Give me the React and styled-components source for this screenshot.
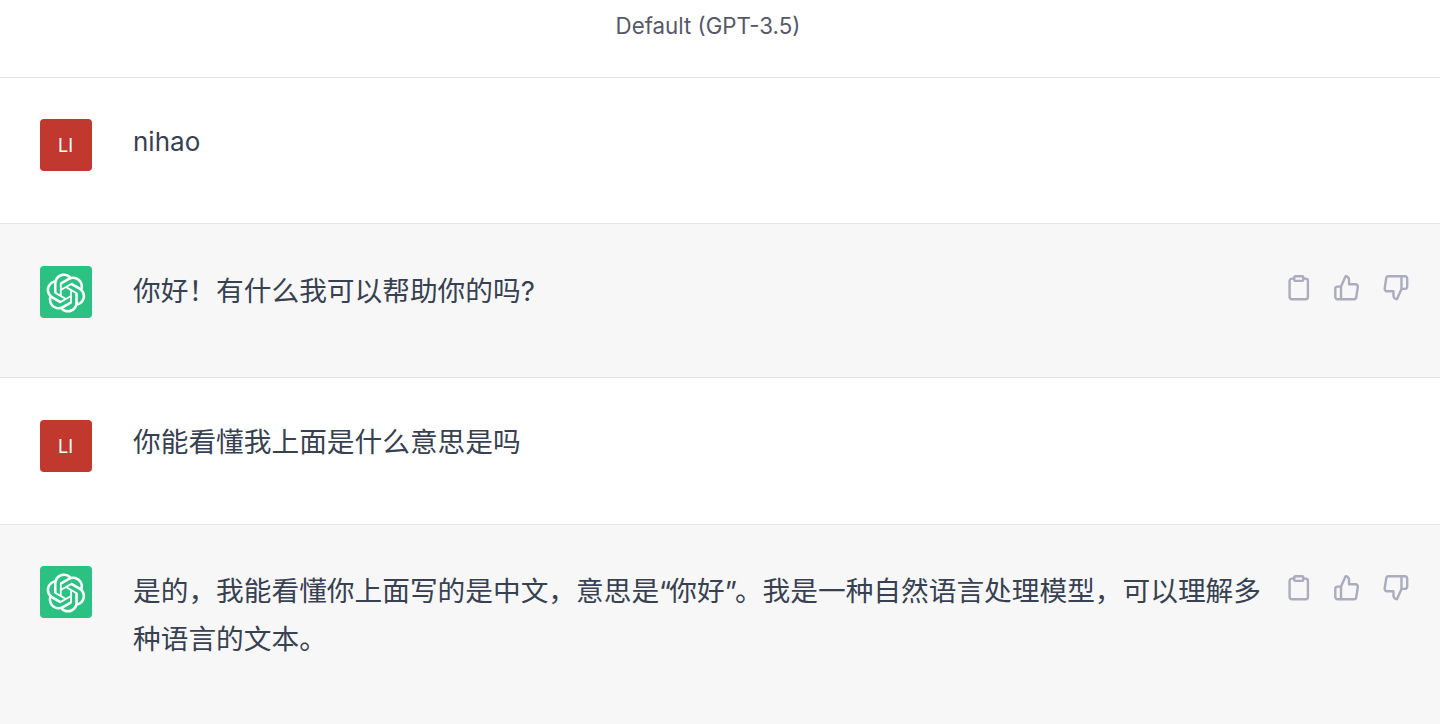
import React from "react";
import styled, { createGlobalStyle } from "styled-components";

const Global = createGlobalStyle`
  html, body {
    margin: 0;
    padding: 0;
    background: #fff;
    height: 724px;
    overflow: hidden;
    font-family: Inter, "Noto Sans CJK SC", sans-serif;
  }
  * { box-sizing: border-box; }
`;

const Page = styled.div`
  width: 1440px;
  height: 724px;
  overflow: hidden;
  display: flex;
  flex-direction: column;
`;

const Header = styled.header`
  height: 78px;
  padding: 11px 24px 0 0;
  border-bottom: 1px solid #e5e5e6;
  text-align: center;
  font-size: 22.3px;
  line-height: 30px;
  color: #565869;
`;

const Row = styled.div`
  display: flex;
  flex-shrink: 0;
  height: ${(p) => p.$height}px;
  padding: ${(p) => p.$top}px 31px 0 39.5px;
  background: ${(p) => (p.$bot ? "#f7f7f8" : "#fff")};
  border-bottom: ${(p) => (p.$last ? "none" : "1px solid #e3e3e5")};
`;

const Avatar = styled.div`
  width: 52px;
  height: 52px;
  flex-shrink: 0;
  border-radius: 4px;
  display: flex;
  align-items: center;
  justify-content: center;
  background: ${(p) => (p.$bot ? "#2bc183" : "#c1382f")};
  color: #fff;
  font-size: 18px;
  padding-top: 1px;
`;

const Text = styled.div`
  flex: 1;
  margin-left: 41.5px;
  margin-top: ${(p) => p.$nudge || 0}px;
  font-size: ${(p) => p.$size || 27.7}px;
  line-height: 48px;
  color: #374151;
`;

const Quote = styled.span`
  letter-spacing: -2px;
`;

const Actions = styled.div`
  display: flex;
  flex-shrink: 0;
  gap: 21px;
  margin-left: 13px;
  padding-top: 8px;
  height: 36px;
`;

const ActionIcon = styled.svg`
  width: 27.5px;
  height: 27.5px;
  fill: none;
  stroke: #acacbe;
  stroke-width: 2.1;
  stroke-linecap: round;
  stroke-linejoin: round;
`;

const Logo = styled.svg`
  width: 40px;
  height: 40px;
  fill: #fff;
`;

const logoPath =
  "M37.5324 16.8707C37.9808 15.5241 38.1363 14.0974 37.9886 12.6859C37.8409 11.2744 37.3934 9.91076 36.676 8.68622C35.6126 6.83404 33.9882 5.3676 32.0373 4.4985C30.0864 3.62941 27.9098 3.40259 25.8215 3.85078C24.8796 2.7893 23.7219 1.94125 22.4257 1.36341C21.1295 0.785575 19.7249 0.491269 18.3058 0.500197C16.1708 0.495044 14.0893 1.16803 12.3614 2.42214C10.6335 3.67624 9.34853 5.44666 8.6917 7.47815C7.30085 7.76286 5.98686 8.3414 4.8377 9.17505C3.68854 10.0087 2.73073 11.0782 2.02839 12.312C0.956464 14.1591 0.498905 16.2988 0.721698 18.4228C0.944492 20.5467 1.83612 22.5449 3.268 24.1293C2.81966 25.4759 2.66413 26.9026 2.81182 28.3141C2.95951 29.7256 3.40701 31.0892 4.12437 32.3138C5.18791 34.1659 6.8123 35.6322 8.76321 36.5013C10.7141 37.3704 12.8907 37.5973 14.9789 37.1492C15.9208 38.2107 17.0786 39.0587 18.3747 39.6366C19.6709 40.2144 21.0755 40.5087 22.4946 40.4998C24.6307 40.5054 26.7133 39.8321 28.4418 38.5772C30.1704 37.3223 31.4556 35.5506 32.1119 33.5179C33.5027 33.2332 34.8167 32.6547 35.9659 31.821C37.115 30.9874 38.0728 29.9178 38.7752 28.684C39.8458 26.8371 40.3023 24.6979 40.0789 22.5748C39.8556 20.4517 38.9639 18.4544 37.5324 16.8707ZM22.4978 37.8849C20.7443 37.8874 19.0459 37.2733 17.6994 36.1501C17.7601 36.117 17.8666 36.0586 17.936 36.0161L25.9004 31.4156C26.1003 31.3019 26.2663 31.137 26.3813 30.9378C26.4964 30.7386 26.5563 30.5124 26.5549 30.2825V19.0542L29.9213 20.998C29.9389 21.0068 29.9541 21.0198 29.9656 21.0359C29.977 21.052 29.9842 21.0707 29.9867 21.0902V30.3889C29.9842 32.375 29.1946 34.2791 27.7909 35.6841C26.3872 37.0892 24.4838 37.8806 22.4978 37.8849ZM6.39227 31.0064C5.51397 29.4888 5.19742 27.7107 5.49804 25.9832C5.55718 26.0187 5.66048 26.0818 5.73461 26.1244L13.699 30.7248C13.8975 30.8408 14.1233 30.902 14.3532 30.902C14.583 30.902 14.8088 30.8408 15.0073 30.7248L24.731 25.1103V28.9979C24.7321 29.0177 24.7283 29.0376 24.7199 29.0556C24.7115 29.0736 24.6988 29.0893 24.6829 29.1012L16.6317 33.7497C14.9096 34.7416 12.8643 35.0097 10.9447 34.4954C9.02506 33.9811 7.38785 32.7263 6.39227 31.0064ZM4.29707 13.6194C5.17156 12.0998 6.55279 10.9364 8.19885 10.3327C8.19885 10.4013 8.19491 10.5228 8.19491 10.6071V19.808C8.19351 20.0378 8.25334 20.2638 8.36823 20.4629C8.48312 20.6619 8.64893 20.8267 8.84863 20.9404L18.5723 26.5542L15.206 28.4979C15.1894 28.5089 15.1703 28.5155 15.1505 28.5173C15.1307 28.5191 15.1107 28.516 15.0924 28.5082L7.04046 23.8557C5.32135 22.8601 4.06716 21.2235 3.55289 19.3046C3.03862 17.3858 3.30624 15.3413 4.29707 13.6194ZM31.955 20.0556L22.2312 14.4411L25.5976 12.4981C25.6142 12.4872 25.6333 12.4805 25.6531 12.4787C25.6729 12.4769 25.6928 12.4801 25.7111 12.4879L33.7631 17.1364C34.9967 17.849 36.0017 18.8982 36.6606 20.1613C37.3194 21.4244 37.6047 22.849 37.4832 24.2684C37.3617 25.6878 36.8382 27.0432 35.9743 28.1759C35.1103 29.3086 33.9415 30.1717 32.6047 30.6641C32.6047 30.5947 32.6047 30.4733 32.6047 30.3889V21.188C32.6066 20.9586 32.5474 20.7328 32.4332 20.5338C32.319 20.3348 32.154 20.1698 31.955 20.0556ZM35.3055 15.0128C35.2464 14.9765 35.1431 14.9142 35.069 14.8717L27.1045 10.2712C26.906 10.1554 26.6803 10.0943 26.4504 10.0943C26.2206 10.0943 25.9948 10.1554 25.7963 10.2712L16.0726 15.8858V11.9982C16.0715 11.9783 16.0753 11.9585 16.0837 11.9405C16.0921 11.9225 16.1048 11.9068 16.1207 11.8949L24.1719 7.25025C25.4053 6.53903 26.8158 6.19376 28.2383 6.25482C29.6608 6.31589 31.0364 6.78077 32.2044 7.59508C33.3723 8.40939 34.2842 9.53945 34.8334 10.8531C35.3826 12.1667 35.5464 13.6095 35.3055 15.0128ZM14.2424 21.9419L10.8752 19.9981C10.8576 19.9893 10.8423 19.9763 10.8309 19.9602C10.8195 19.9441 10.8122 19.9254 10.8098 19.9058V10.6071C10.8107 9.18295 11.2173 7.78848 11.9819 6.58696C12.7466 5.38544 13.8377 4.42659 15.1275 3.82264C16.4173 3.21869 17.8524 2.99464 19.2649 3.1767C20.6775 3.35876 22.0089 3.93941 23.1034 4.85067C23.0427 4.88379 22.937 4.94215 22.8668 4.98473L14.9024 9.58517C14.7025 9.69878 14.5366 9.86356 14.4215 10.0626C14.3065 10.2616 14.2466 10.4877 14.2479 10.7175L14.2424 21.9419ZM16.071 17.9991L20.4018 15.4978L24.7325 17.9975V22.9985L20.4018 25.4983L16.071 22.9985V17.9991Z";

function BotAvatar() {
  return (
    <Avatar $bot>
      <Logo viewBox="0 0 41 41">
        <path d={logoPath} />
      </Logo>
    </Avatar>
  );
}

function MessageActions() {
  return (
    <Actions>
      <ActionIcon viewBox="0 0 24 24">
        <path d="M16 4h2a2 2 0 0 1 2 2v14a2 2 0 0 1-2 2H6a2 2 0 0 1-2-2V6a2 2 0 0 1 2-2h2" />
        <rect x="8" y="2" width="8" height="4" rx="1" ry="1" />
      </ActionIcon>
      <ActionIcon viewBox="0 0 24 24">
        <path d="M14 9V5a3 3 0 0 0-3-3l-4 9v11h11.28a2 2 0 0 0 2-1.7l1.38-9a2 2 0 0 0-2-2.3zM7 22H4a2 2 0 0 1-2-2v-7a2 2 0 0 1 2-2h3" />
      </ActionIcon>
      <ActionIcon viewBox="0 0 24 24">
        <path d="M10 15v4a3 3 0 0 0 3 3l4-9V2H5.72a2 2 0 0 0-2 1.7l-1.38 9a2 2 0 0 0 2 2.3zm7-13h2.67A2.31 2.31 0 0 1 22 4v7a2.31 2.31 0 0 1-2.33 2H17" />
      </ActionIcon>
    </Actions>
  );
}

export default function App() {
  return (
    <Page>
      <Global />
      <Header>Default (GPT-3.5)</Header>
      <Row $height={146} $top={41}>
        <Avatar>LI</Avatar>
        <Text $size={26} $nudge={-1}>nihao</Text>
      </Row>
      <Row $bot $height={154} $top={42}>
        <BotAvatar />
        <Text $nudge={1}>你好！有什么我可以帮助你的吗?</Text>
        <MessageActions />
      </Row>
      <Row $height={147} $top={42}>
        <Avatar>LI</Avatar>
        <Text $nudge={-2}>你能看懂我上面是什么意思是吗</Text>
      </Row>
      <Row $bot $last $height={199} $top={41}>
        <BotAvatar />
        <Text $nudge={1}>
          是的，我能看懂你上面写的是中文，意思是<Quote>“</Quote>你好<Quote>”</Quote>。我是一种自然语言处理模型，可以理解多
          <br />
          种语言的文本。
        </Text>
        <MessageActions />
      </Row>
    </Page>
  );
}
